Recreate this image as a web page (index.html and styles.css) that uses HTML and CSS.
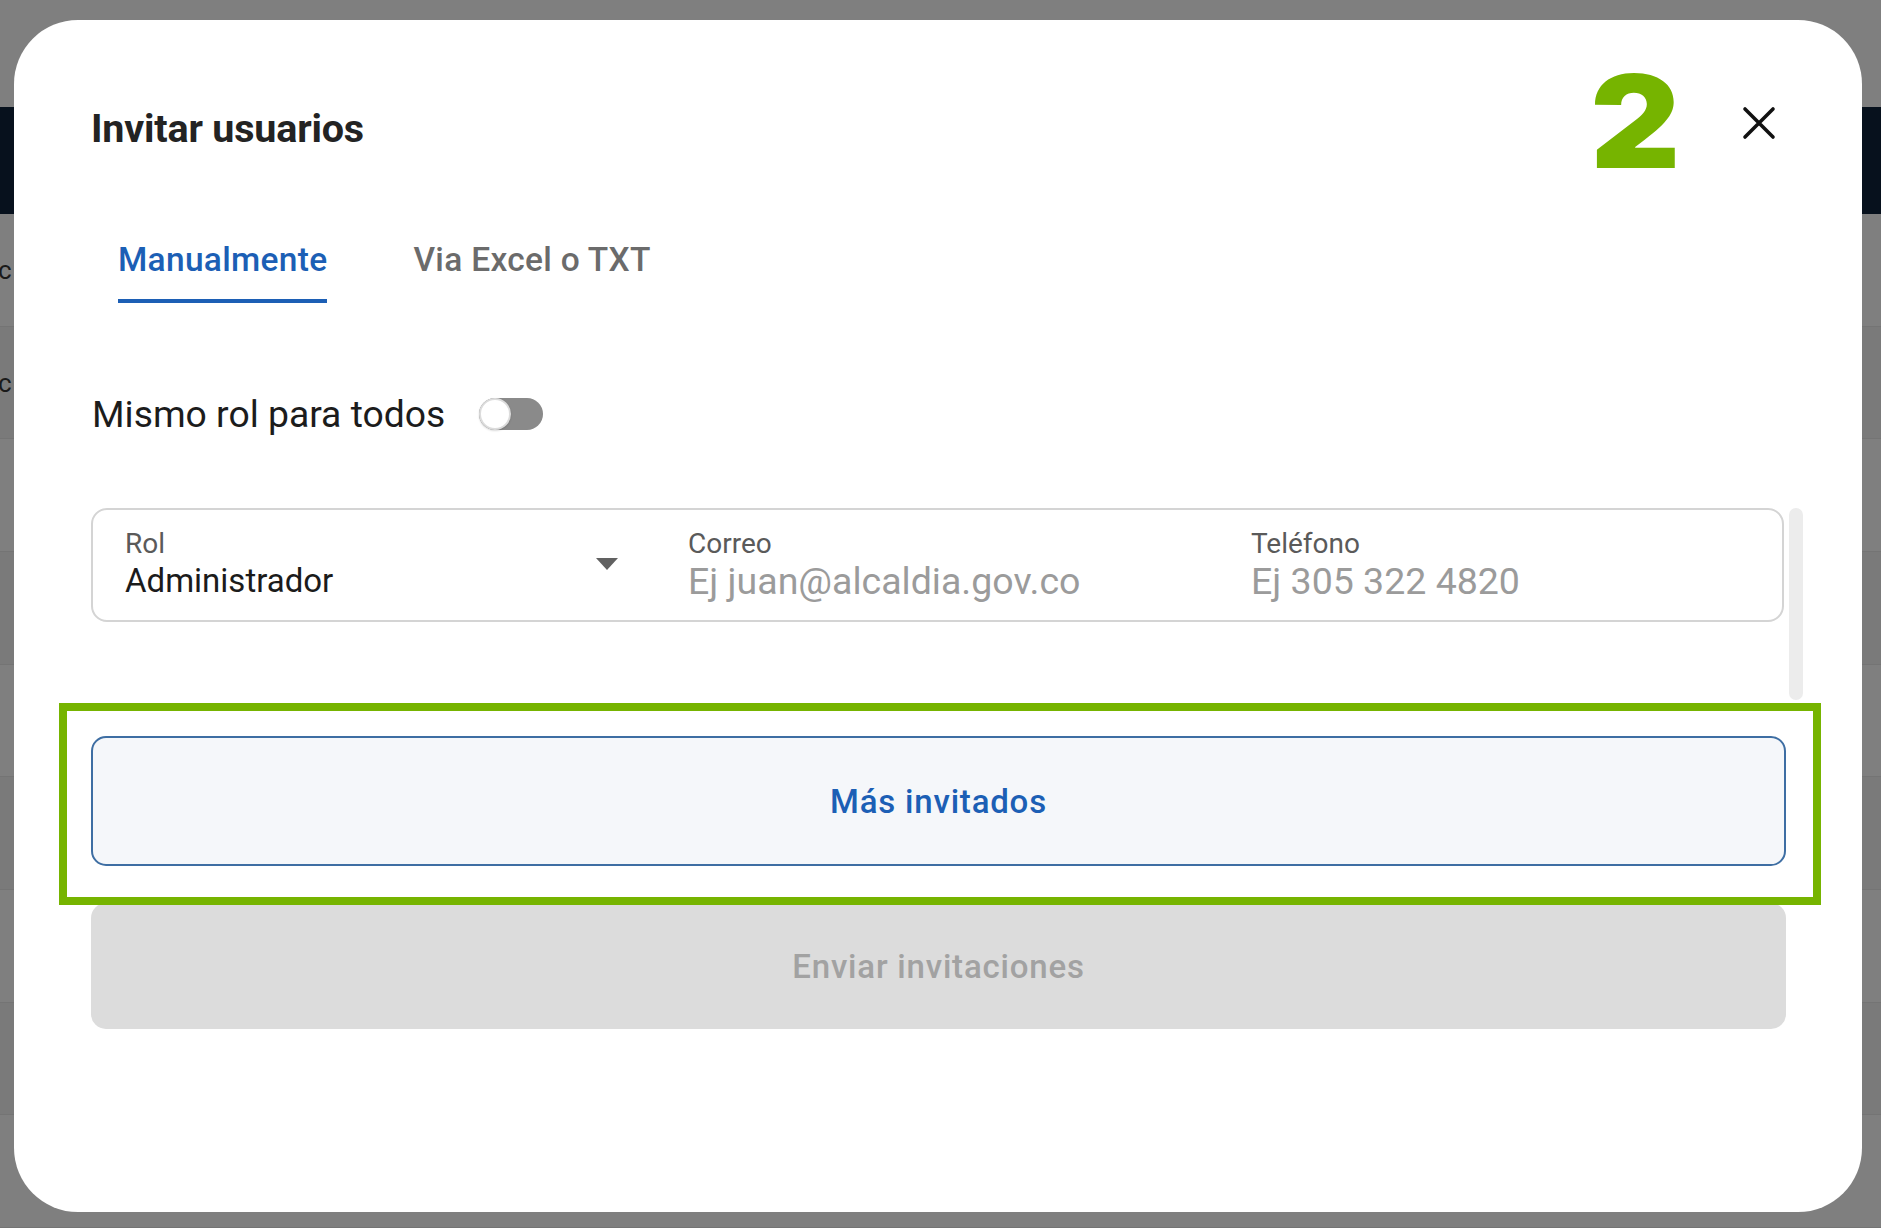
FILE: index.html
```html
<!DOCTYPE html>
<html lang="es">
<head>
<meta charset="utf-8">
<title>Invitar usuarios</title>
<link rel="stylesheet" href="styles.css">
</head>
<body>
  <div class="backdrop">
    <div class="bd-top"></div>
    <div class="bd-row"><span class="bd-text">c</span></div>
    <div class="bd-row alt"><span class="bd-text">c</span></div>
    <div class="bd-row"></div>
    <div class="bd-row alt"></div>
    <div class="bd-row"></div>
    <div class="bd-row alt"></div>
    <div class="bd-row"></div>
    <div class="bd-row alt"></div>
    <div class="bd-row"></div>
  </div>

  <div class="modal">
    <header class="modal-head">
      <h1 class="title">Invitar usuarios</h1>
      <span class="step">2</span>
      <button class="close" aria-label="Cerrar">
        <svg viewBox="0 0 34 34" width="34" height="34"><path d="M3 3 L31 31 M31 3 L3 31" stroke="#111" stroke-width="3.6" stroke-linecap="round" fill="none"/></svg>
      </button>
    </header>

    <nav class="tabs">
      <span class="tab active">Manualmente</span>
      <span class="tab">Via Excel o TXT</span>
    </nav>

    <div class="same-role">
      <span class="same-label">Mismo rol para todos</span>
      <span class="switch"><span class="thumb"></span></span>
    </div>

    <div class="list">
      <div class="card">
        <div class="field select">
          <div class="field-text">
            <div class="label">Rol</div>
            <div class="value">Administrador</div>
          </div>
          <span class="caret"></span>
        </div>
        <div class="field">
          <div class="label">Correo</div>
          <div class="value placeholder">Ej juan@alcaldia.gov.co</div>
        </div>
        <div class="field">
          <div class="label">Teléfono</div>
          <div class="value placeholder">Ej 305 322 4820</div>
        </div>
      </div>
      <div class="scrollbar"></div>
    </div>

    <div class="highlight">
      <button class="btn-outline">Más invitados</button>
    </div>
    <button class="btn-disabled">Enviar invitaciones</button>
  </div>
</body>
</html>
```
FILE: styles.css
```css
* { box-sizing: border-box; }
html, body { margin: 0; padding: 0; }
body {
  width: 1881px;
  height: 1228px;
  background: #7f7f7f;
  position: relative;
  overflow: hidden;
  font-family: Roboto, "Liberation Sans", sans-serif;
}

/* page behind the dimmed overlay */
.backdrop {
  position: absolute;
  inset: 0;
  display: flex;
  flex-direction: column;
}
.bd-top {
  margin-top: 107px;
  height: 108px;
  background: #07111d;
}
.bd-row {
  height: 113.5px;
  border-bottom: 1px solid #747474;
  display: flex;
  align-items: center;
  background: #7f7f7f;
}
.bd-row.alt { background: #7a7a7a; }
.bd-text {
  font-size: 26px;
  color: #1a1a1a;
  margin-left: -2px;
}

/* modal */
.modal {
  position: absolute;
  left: 14px;
  top: 20px;
  width: 1848px;
  height: 1192px;
  background: #fff;
  border-radius: 64px;
  padding: 54px 76px 0 77px;
  display: flex;
  flex-direction: column;
}

.modal-head {
  display: flex;
  align-items: center;
  height: 94px;
}
.title {
  margin: 14px 0 0 0;
  font-size: 39.5px;
  font-weight: 700;
  color: #232323;
  letter-spacing: -0.2px;
  flex: 1;
}
.step {
  font-family: Inter, "DejaVu Sans", sans-serif;
  font-weight: 900;
  font-size: 129px;
  line-height: 94px;
  color: #76b400;
  margin-right: 62px;
  display: inline-block;
  transform: scaleX(1.08);
  transform-origin: right center;
}
.close {
  border: 0;
  background: none;
  padding: 0;
  width: 34px;
  height: 34px;
  margin: 4px 10px 0 0;
  display: flex;
}

.tabs {
  display: flex;
  gap: 86px;
  padding-left: 27px;
  margin-top: 72px;
}
.tab {
  font-size: 33.5px;
  font-weight: 500;
  line-height: 40px;
  letter-spacing: 0.3px;
  color: #6b6b6b;
  padding-bottom: 19px;
  border-bottom: 4px solid transparent;
}
.tab.active {
  color: #1c5fb5;
  border-bottom-color: #1c5fb5;
}

.same-role {
  display: flex;
  align-items: center;
  gap: 34px;
  margin-top: 89px;
  padding-left: 1px;
}
.same-label {
  font-size: 37.3px;
  line-height: 44px;
  color: #1c1c1c;
}
.switch {
  width: 64px;
  height: 32px;
  border-radius: 16px;
  background: #8a8a8a;
  display: flex;
  align-items: center;
}
.thumb {
  width: 32px;
  height: 32px;
  border-radius: 50%;
  background: #fff;
  border: 2px solid #dcdcdc;
  box-shadow: 0 1px 2px rgba(0,0,0,0.15);
}

.list {
  position: relative;
  height: 192px;
  margin-top: 72px;
}
.card {
  height: 114px;
  margin-right: 2px;
  border: 2px solid #d4d4d4;
  border-radius: 16px;
  padding: 0 0 0 32px;
  display: grid;
  grid-template-columns: 493px 493px 493px;
  column-gap: 70px;
  align-items: center;
}
.field.select {
  display: flex;
  align-items: center;
}
.field-text { flex: 1; }
.label {
  font-size: 28px;
  line-height: 32px;
  color: #5a5a5a;
}
.value {
  font-size: 33px;
  line-height: 42px;
  color: #1b1b1b;
}
.value.placeholder {
  color: #9b9b9b;
  font-size: 37.5px;
}
.caret {
  width: 0;
  height: 0;
  border-left: 11px solid transparent;
  border-right: 11px solid transparent;
  border-top: 12px solid #616161;
  margin-top: -2px;
}
.scrollbar {
  position: absolute;
  top: 0;
  right: -17px;
  width: 14px;
  height: 192px;
  border-radius: 7px;
  background: #ececec;
}

.highlight {
  margin: 3px -35px 0 -32px;
  border: 8px solid #76b400;
  background: #fff;
  padding: 25px 27px 31px 24px;
  position: relative;
  z-index: 1;
}
.btn-outline {
  display: block;
  width: 100%;
  height: 130px;
  border: 2px solid #3e6ea3;
  border-radius: 15px;
  background: #f5f7fa;
  font-family: Roboto, "Liberation Sans", sans-serif;
  font-size: 33px;
  font-weight: 500;
  letter-spacing: 0.8px;
  color: #1c5fb5;
}
.btn-disabled {
  display: block;
  width: 100%;
  height: 126px;
  margin-top: -2px;
  border: 0;
  border-radius: 15px;
  background: #dcdcdc;
  font-family: Roboto, "Liberation Sans", sans-serif;
  font-size: 33px;
  font-weight: 500;
  letter-spacing: 0.8px;
  color: #a2a2a2;
}
```
